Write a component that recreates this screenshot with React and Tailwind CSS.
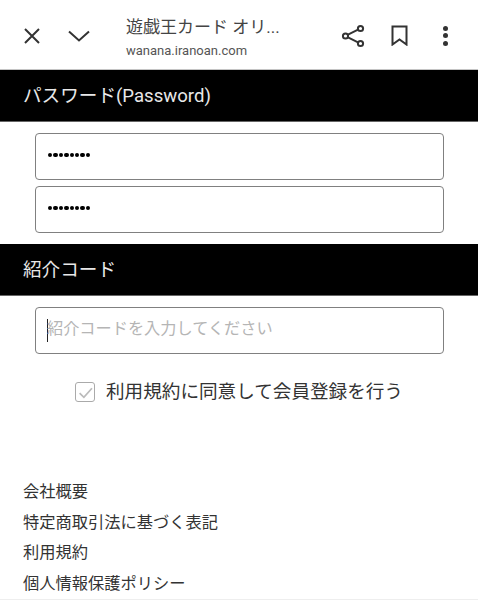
import React from 'react';

const font = { fontFamily: 'Roboto, "Noto Sans CJK JP", sans-serif' };

function Section({ children }) {
  return (
    <div className="flex h-[52px] shrink-0 items-center bg-black pl-[23px] pt-[3px] text-[18.6px] text-[#e8e8e8] border-b border-b-[#666]">
      {children}
    </div>
  );
}

function Dots() {
  return (
    <div className="flex h-[47px] items-start rounded-[4px] border border-[#808080] bg-white pl-[12px] pt-[19px]">
      <div className="flex gap-[1px]">
        {[0, 1, 2, 3, 4, 5, 6, 7].map((i) => (
          <span key={i} className="h-[4.4px] w-[4.4px] rounded-full bg-black" />
        ))}
      </div>
    </div>
  );
}

export default function App() {
  return (
    <div className="flex h-[600px] w-[478px] flex-col overflow-hidden bg-white" style={font}>
      <header className="flex h-[70px] shrink-0 items-center border-b border-b-[#c4c4c4] pt-[2px]">
        <svg className="ml-[24px] h-[16px] w-[16px]" viewBox="0 0 16 16" fill="none" stroke="#333" strokeWidth="2">
          <path d="M1 1l14 14M15 1L1 15" />
        </svg>
        <svg className="ml-[28px] h-[12px] w-[22px]" viewBox="0 0 22 12" fill="none" stroke="#333" strokeWidth="2">
          <path d="M1 1.5l10 9 10-9" />
        </svg>
        <div className="ml-[36px] flex w-[192px] flex-col pt-[4px]">
          <span className="text-[17px] leading-[22px] text-[#444]">遊戯王カード オリ...</span>
          <span className="mt-[5px] text-[13px] leading-[16px] text-[#555]">wanana.iranoan.com</span>
        </div>
        <svg className="ml-[23px] h-[24px] w-[24px]" viewBox="0 0 24 24" fill="none" stroke="#333" strokeWidth="2">
          <circle cx="19.5" cy="4.5" r="2.6" />
          <circle cx="4.5" cy="12" r="2.6" />
          <circle cx="19.5" cy="19.5" r="2.6" />
          <path d="M7 10.7l10-5M7 13.3l10 5" />
        </svg>
        <svg className="ml-[26px] h-[21px] w-[17px]" viewBox="0 0 17 21" fill="none" stroke="#333" strokeWidth="2">
          <path d="M1.5 1.5h14v18l-7-5-7 5z" />
        </svg>
        <div className="ml-[35px] flex flex-col gap-[2.5px]">
          <span className="h-[5px] w-[5px] rounded-full bg-[#333]" />
          <span className="h-[5px] w-[5px] rounded-full bg-[#333]" />
          <span className="h-[5px] w-[5px] rounded-full bg-[#333]" />
        </div>
      </header>

      <Section>パスワード(Password)</Section>

      <div className="flex shrink-0 flex-col gap-[6px] pl-[35px] pr-[34px] pt-[11px] pb-[11px]">
        <Dots />
        <Dots />
      </div>

      <Section>紹介コード</Section>

      <div className="shrink-0 pl-[35px] pr-[34px] pt-[11px]">
        <div className="flex h-[47px] items-center rounded-[4px] border border-[#808080] bg-white pl-[11px] pb-[3px] text-[16.2px] text-[#b5b5b5]">
          <span className="mr-[-1px] mt-[3px] h-[23px] w-[1px] bg-[#222]" />
          紹介コードを入力してください
        </div>
      </div>

      <div className="mt-[26px] flex shrink-0 items-center pl-[75px]">
        <span className="flex h-[20px] w-[20px] items-center justify-center rounded-[3px] border border-[#aaa]">
          <svg className="h-[15px] w-[15px]" viewBox="0 0 14 14" fill="none" stroke="#bbb" strokeWidth="1.6">
            <path d="M1.5 7.5l4 4L13 3" />
          </svg>
        </span>
        <span className="ml-[11px] text-[18.6px] leading-[24px] text-[#333]">利用規約に同意して会員登録を行う</span>
      </div>

      <nav className="mt-[73px] flex shrink-0 flex-col pl-[23px] text-[16.25px] leading-[30.6px] text-[#333]">
        <a>会社概要</a>
        <a>特定商取引法に基づく表記</a>
        <a>利用規約</a>
        <a>個人情報保護ポリシー</a>
      </nav>

      <div className="mt-auto h-[7px] shrink-0 bg-[#eeeeee]" />
    </div>
  );
}
